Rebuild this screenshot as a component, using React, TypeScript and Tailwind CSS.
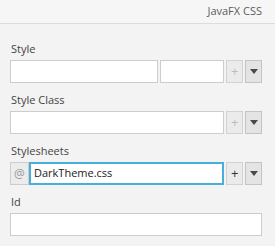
import React from "react";

const font = { fontFamily: '"Open Sans", "Noto Sans", sans-serif' };

function Caret() {
  return (
    <svg width="8" height="5" viewBox="0 0 8 5" className="block">
      <path d="M0 0 L8 0 L4 5 Z" fill="#4a4a4a" />
    </svg>
  );
}

function PlusButton({ enabled }: { enabled?: boolean }) {
  return (
    <div
      className={`w-[17px] h-[23px] flex items-center justify-center border border-[#d2d2d2] bg-[#ebebeb] text-[13px] leading-none ${
        enabled ? "text-[#333]" : "text-[#bdbdbd]"
      }`}
    >
      +
    </div>
  );
}

function MenuButton() {
  return (
    <div className="w-[17px] h-[23px] flex items-center justify-center border border-[#c4c4c4] bg-[#e4e4e4]">
      <Caret />
    </div>
  );
}

function Field({ className = "" }: { className?: string }) {
  return <div className={`h-[23px] bg-white border border-[#cdcdcd] ${className}`} />;
}

function Label({ children }: { children: React.ReactNode }) {
  return <div className="text-[11px] leading-[15px] text-[#444] mb-[4px] pl-[1px]">{children}</div>;
}

export default function App() {
  return (
    <div className="w-[275px] h-[246px] bg-[#f3f3f3] overflow-hidden" style={font}>
      <div className="h-[24px] border-b border-[#dcdcdc] bg-[#f6f6f6] flex items-center justify-end pr-[13px]">
        <span className="text-[11px] text-[#5c5c5c]">JavaFX CSS</span>
      </div>
      <div className="px-[10px] pr-[13px] pt-[17px] flex flex-col gap-[9px]">
        <div>
          <Label>Style</Label>
          <div className="flex gap-[2px]">
            <Field className="w-[150px]" />
            <Field className="w-[65px]" />
            <PlusButton />
            <MenuButton />
          </div>
        </div>
        <div>
          <Label>Style Class</Label>
          <div className="flex gap-[2px]">
            <Field className="w-[217px]" />
            <PlusButton />
            <MenuButton />
          </div>
        </div>
        <div>
          <Label>Stylesheets</Label>
          <div className="flex gap-[2px]">
            <div className="flex w-[217px] h-[23px]">
              <div className="w-[19px] h-[23px] border border-[#cdcdcd] bg-[#ececec] flex items-center justify-center text-[12px] text-[#999]">
                @
              </div>
              <div className="flex-1 h-[23px] bg-white border-2 border-[#46afdc] flex items-center pl-[3px] text-[11px] text-[#222]">
                DarkTheme.css
              </div>
            </div>
            <PlusButton enabled />
            <MenuButton />
          </div>
        </div>
        <div>
          <Label>Id</Label>
          <Field className="w-[252px]" />
        </div>
      </div>
    </div>
  );
}
